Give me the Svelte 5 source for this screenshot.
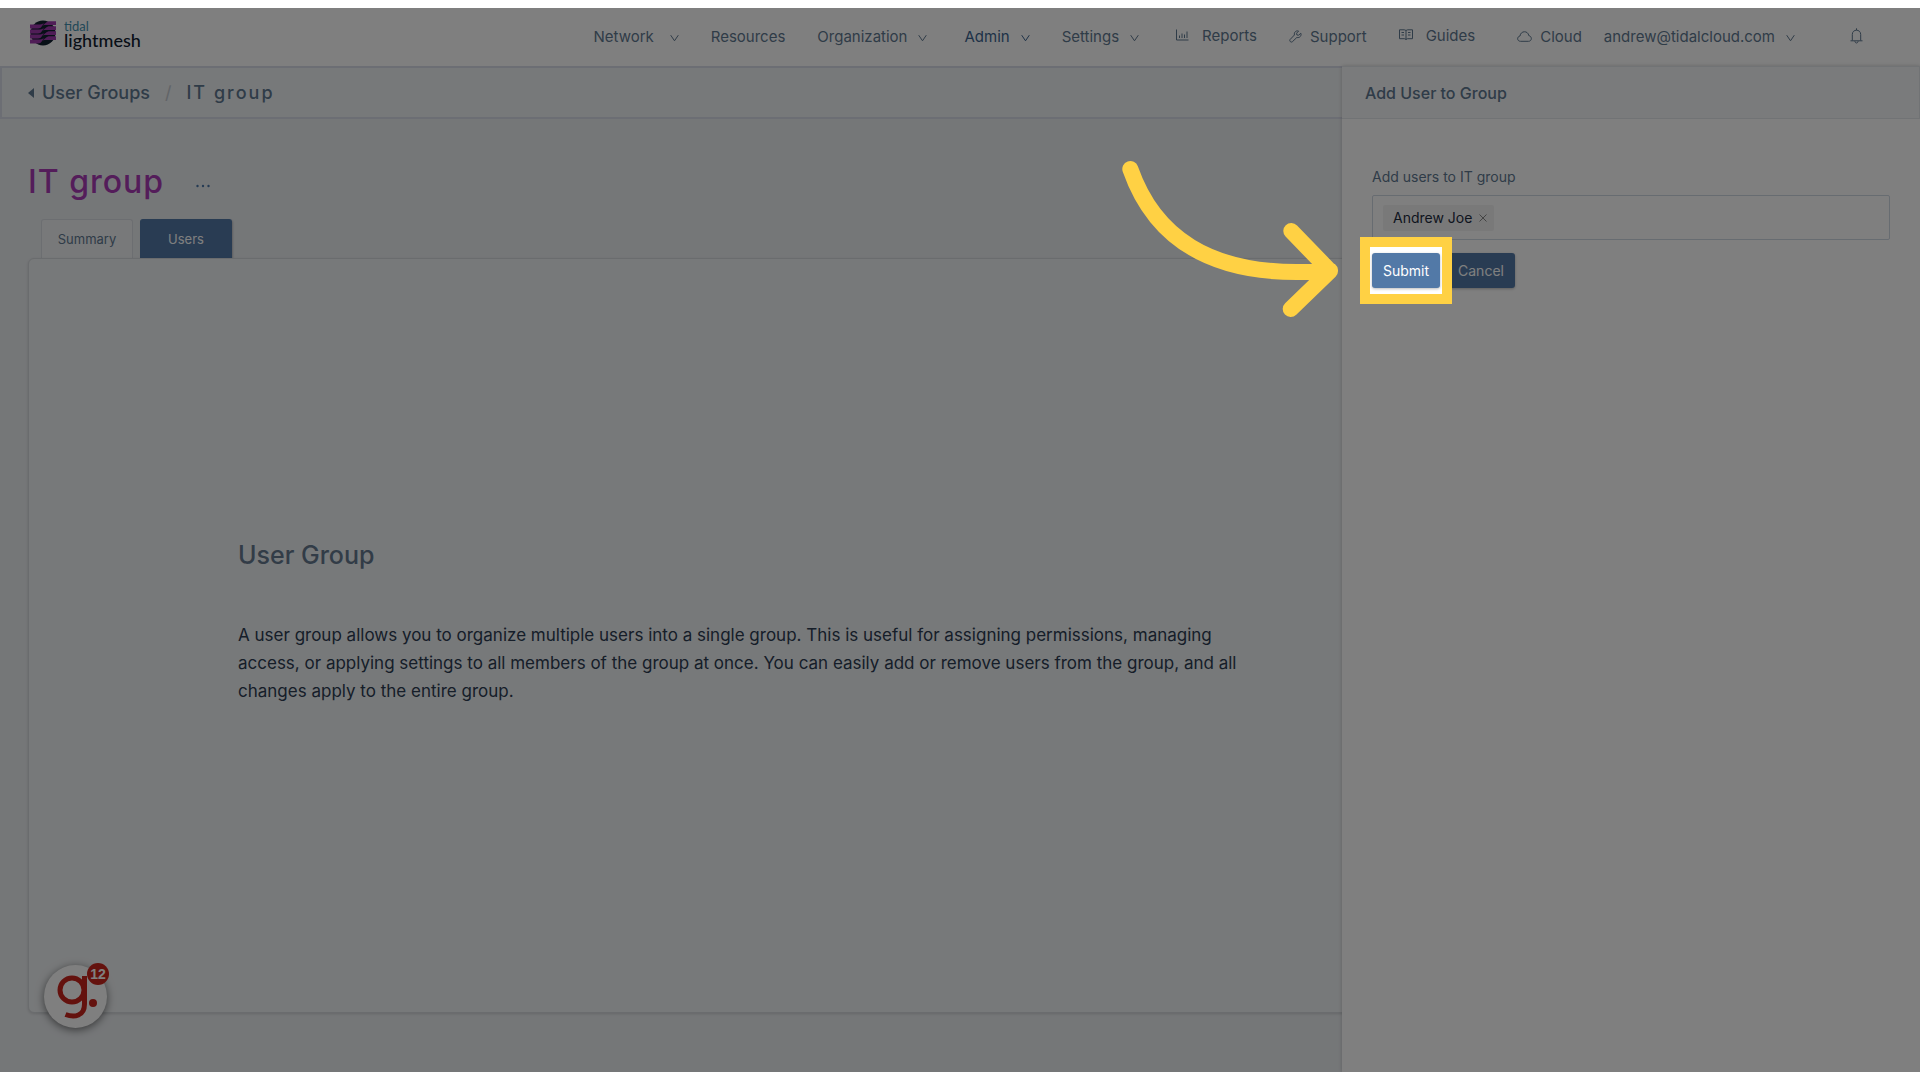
<script>
	let search = "";
	let users = ["Andrew Joe"];
	let activeTab = "Users";

	const tabs = ["Summary", "Users"];
	const links = [
		{name: "Network", chevron: true, spread: true},
		{name: "Resources"},
		{name: "Organization", chevron: true},
		{name: "Admin", chevron: true, active: true, gap: "medium"},
		{name: "Settings", chevron: true},
		{name: "Reports", icon: "chart", spread: true, raised: true, gap: "medium"},
		{name: "Support", icon: "wrench"},
		{name: "Guides", icon: "book", spread: true, raised: true},
		{name: "Cloud", icon: "cloud", gap: "wide"},
		{name: "andrew@tidalcloud.com", chevron: true, gap: "narrow"},
	];

	const removeUser = (name) => {
		users = users.filter((u) => u !== name);
	}
</script>

<div class="app">
	<header>
		<a href="#home" class="logo" aria-label="tidal lightmesh">
			<svg width="26" height="26" viewBox="0 0 26 26">
				<circle cx="13" cy="13" r="12.5" fill="#10202f" />
				<g fill="#a03aae">
					{#each [0, 5, 10, 15] as y}
						<path transform="translate(0 {y})" d="M0 4.500h8c3 0 4-.5 6-1.500-2 2-2 5.500-6 5.500H0z" />
						<path transform="translate(0 {y})" d="M26 1.200h-6c-4 0-4 2.300-8 4.300 3-.6 4-.5 6-.5h8z" />
					{/each}
				</g>
			</svg>
			<span class="brand"><span class="tidal">tidal</span><span class="mesh">lightmesh</span></span>
		</a>
		<nav>
			{#each links as link}
				<a href="#{link.name}" class="link {link.gap || ''}" class:active={link.active} class:spread={link.spread} class:raised={link.raised}>
					{#if link.icon === "chart"}
						<svg width="13" height="12" viewBox="0 0 13 12"><path d="M.5.5v10.500h12M3.500 9V6.500M6 9V4.500M8.500 9V5.500M11 9V2.500" /></svg>
					{:else if link.icon === "wrench"}
						<svg width="13" height="13" viewBox="0 0 13 13"><path d="M11.800 3.200 9.700 5.200 7.900 5 7.600 3.200 9.600 1.100C7.500.2 4.800 1.800 5.400 5L1 9.600c-1 1.400 1 3.300 2.300 2.200L7.800 7.500c3 .7 5-1.900 4-4.300z" /></svg>
					{:else if link.icon === "book"}
						<svg width="14" height="12" viewBox="0 0 14 12"><path d="M7 1.500v9M.5.800H5c1 0 2 .4 2 1.200C7 1.200 8 .8 9 .8h4.500v8.900H9c-1 0-2 .4-2 1.300 0-.9-1-1.300-2-1.300H.5zM2.500 3.500h2.500M2.500 6h2.500M9 3.500h2.500M9 6h2.500" /></svg>
					{:else if link.icon === "cloud"}
						<svg width="15" height="11" viewBox="0 0 15 11"><path d="M3.500 10.300C-.2 10.300-.2 5.500 3 5 3.700-.6 11-.6 11.800 4.600c3.400.6 3.400 5.700-.3 5.700z" /></svg>
					{/if}
					<span>{link.name}</span>
					{#if link.chevron}
						<svg class="chevron" width="9" height="8" viewBox="0 0 9 8"><path d="M.7 1.200 4.500 6.800 8.300 1.200" /></svg>
					{/if}
				</a>
			{/each}
			<button class="bell" aria-label="Notifications">
				<svg width="13" height="16" viewBox="0 0 13 16"><path d="M2.300 12.500V6.400c0-5.600 8.400-5.600 8.400 0v6.100M.5 12.800h12M6.500.3v1.800M4.900 13.200c.2 2.400 3 2.400 3.200 0" /></svg>
			</button>
		</nav>
	</header>

	<div class="crumbs">
		<a href="#groups"><svg width="6" height="10" viewBox="0 0 6 10"><path d="M6 0v10L0 5z" /></svg>User Groups</a>
		<span class="slash">/</span>
		<span class="current">IT group</span>
	</div>

	<main>
		<div class="title">
			<h1>IT group</h1>
			<button aria-label="More actions">
				<svg width="14" height="4" viewBox="0 0 14 4"><circle cx="1.500" cy="2" r="1.200" /><circle cx="7" cy="2" r="1.200" /><circle cx="12.500" cy="2" r="1.200" /></svg>
			</button>
		</div>
		<div class="tabs">
			{#each tabs as tab}
				<button class:selected={activeTab === tab} on:click={() => activeTab = tab}>{tab}</button>
			{/each}
		</div>
		<section class="card">
			<h2>User Group</h2>
			<p>A user group allows you to organize multiple users into a single group. This is useful for assigning permissions, managing access, or applying settings to all members of the group at once. You can easily add or remove users from the group, and all changes apply to the entire group.</p>
		</section>
	</main>

	<button class="guide" aria-label="Open guides">
		<svg width="63" height="63" viewBox="0 0 63 63" fill="none" stroke="#c9251c" stroke-width="5">
			<circle cx="28" cy="25" r="12" />
			<path d="M40.500 11v28c0 12-10 14-19 10.500" />
			<circle cx="49" cy="38" r="4" fill="#c9251c" stroke="none" />
		</svg>
		<span class="badge">12</span>
	</button>

	<aside>
		<h3>Add User to Group</h3>
		<form on:submit|preventDefault>
			<label for="users">Add users to IT group</label>
			<div class="select">
				{#each users as user}
					<span class="tag">{user}
						<button type="button" aria-label="Remove {user}" on:click={() => removeUser(user)}>
							<svg width="8" height="8" viewBox="0 0 8 8"><path d="M.5.5l7 7M7.500.5l-7 7" /></svg>
						</button>
					</span>
				{/each}
				<input id="users" type="text" bind:value={search}>
			</div>
			<div class="actions">
				<button type="button" class="btn">Cancel</button>
				<div class="target">
					<button type="submit" class="btn">Submit</button>
					<span class="spotlight"></span>
					<svg class="arrow" width="220" height="160" viewBox="0 0 220 160">
						<path d="M10.300 9C31.700 70 83.300 121.700 210 110.500M171.300 71 210 111 170.700 149" />
					</svg>
				</div>
			</div>
		</form>
	</aside>
</div>

<style>
	:global(body) {
		margin: 0;
		background: #fff;
	}
	.app, .app * {
		box-sizing: border-box;
	}
	.app {
		position: relative;
		display: flex;
		flex-direction: column;
		min-height: calc(100vh - 16px);
		margin: 8px 0;
		overflow: hidden;
		background: #ebeef1;
		color: #5f7890;
		font-family: Inter, "Liberation Sans", sans-serif;
		font-size: 15px;
	}
	a {
		color: inherit;
		text-decoration: none;
	}
	button {
		padding: 0;
		border: 0;
		background: none;
		color: inherit;
		font: inherit;
		cursor: pointer;
	}
	svg {
		flex: none;
	}

	header {
		display: flex;
		justify-content: space-between;
		height: 58px;
		padding: 0 57px 0 30px;
		background: #fff;
	}
	.logo {
		display: flex;
		gap: 8px;
		padding-top: 12px;
	}
	.brand {
		display: flex;
		flex-direction: column;
		font-family: Lato, sans-serif;
	}
	.tidal {
		font-size: 13px;
		line-height: 12px;
		color: #4591b0;
	}
	.mesh {
		font-size: 18px;
		line-height: 16px;
		font-weight: 500;
		color: #10202f;
	}
	nav {
		display: flex;
		align-items: center;
		padding-bottom: 2px;
	}
	nav svg {
		fill: none;
		stroke: currentColor;
	}
	.link {
		display: flex;
		align-items: center;
		gap: 8px;
		margin-left: 32px;
	}
	.link.spread {
		gap: 13px;
	}
	.link.raised {
		padding-bottom: 2px;
	}
	.link.medium {
		margin-left: 37px;
	}
	.link.wide {
		margin-left: 42px;
	}
	.link.narrow {
		margin-left: 22px;
	}
	.active {
		color: #3d6590;
	}
	.chevron {
		margin: 4px 0 0 3px;
	}
	.bell {
		margin-left: 55px;
		line-height: 0;
	}

	.crumbs {
		display: flex;
		align-items: center;
		height: 53px;
		padding-left: 26px;
		border: 2px solid #d9dce9;
		background: #eff2f4;
		font-size: 18px;
		font-weight: 500;
	}
	.crumbs a {
		display: flex;
		align-items: center;
		gap: 8px;
	}
	.crumbs svg {
		fill: currentColor;
	}
	.slash {
		margin: 0 15px;
		font-weight: 400;
		color: #c3c9d0;
	}
	.current {
		letter-spacing: 2px;
	}

	main {
		display: flex;
		flex-direction: column;
		flex: 1;
		padding: 41px 28px 59px;
	}
	.title {
		display: flex;
		align-items: center;
		gap: 32px;
	}
	h1 {
		margin: 0;
		font-size: 32px;
		line-height: 44px;
		font-weight: 500;
		letter-spacing: 1px;
		color: #a83bb5;
	}
	.title svg {
		fill: #4a77a8;
	}
	.tabs {
		display: flex;
		gap: 7px;
		margin: 15px 0 0 13px;
	}
	.tabs button {
		width: 92px;
		height: 39px;
		border: 1px solid #d9dde2;
		border-bottom: 0;
		border-radius: 3px 3px 0 0;
		background: #f0f3f5;
		font-size: 13px;
	}
	.tabs .selected {
		border-color: #5279a7;
		background: #5279a7;
		color: #fff;
		box-shadow: 1px 1px 2px #0003;
	}
	.card {
		display: flex;
		flex-direction: column;
		justify-content: center;
		flex: 1;
		padding: 0 209px 28px;
		border: 1px solid #d4d8dc;
		border-radius: 6px;
		background: #eff2f4;
		box-shadow: 0 1px 3px #0002;
	}
	h2 {
		margin: 0 0 50px;
		font-size: 25px;
		line-height: 32px;
		font-weight: 500;
		color: #64798f;
	}
	p {
		max-width: 1020px;
		margin: 0;
		font-size: 17px;
		line-height: 28px;
		color: #2d3c52;
	}

	.guide {
		position: absolute;
		bottom: 44px;
		left: 44px;
		width: 63px;
		height: 63px;
		border-radius: 50%;
		background: #fff;
		box-shadow: 0 2px 8px #0008;
	}
	.badge {
		position: absolute;
		top: -2px;
		right: -2px;
		width: 22px;
		border-radius: 50%;
		background: #c9251c;
		color: #fff;
		font: bold 14px/22px "Liberation Sans", sans-serif;
	}

	aside {
		position: absolute;
		top: 58px;
		right: 0;
		bottom: 0;
		width: 578px;
		background: #fff;
		box-shadow: 0 0 4px #0003;
	}
	h3 {
		margin: 0;
		padding: 2px 0 0 23px;
		border: 1px solid #e3e6eb;
		border-left: 0;
		background: #f4f6f9;
		font-size: 16px;
		line-height: 49px;
		font-weight: 500;
	}
	form {
		padding: 48px 30px;
		font-size: 14px;
	}
	label {
		display: block;
		line-height: 20px;
	}
	.select {
		display: flex;
		align-items: center;
		height: 45px;
		margin: 8px 0 13px;
		padding: 0 10px;
		border: 1px solid #cfd8e2;
		border-radius: 2px;
	}
	.tag {
		display: flex;
		align-items: center;
		gap: 7px;
		height: 26px;
		padding: 0 7px 0 10px;
		border-radius: 2px;
		background: #f3f3f3;
		color: #1d2b3e;
		font-size: 14px;
	}
	.tag button {
		line-height: 0;
	}
	.tag svg {
		fill: none;
		stroke: #888;
	}
	input {
		flex: 1;
		min-width: 0;
		border: 0;
		outline: 0;
		background: none;
		font: inherit;
	}
	.actions {
		display: flex;
		flex-direction: row-reverse;
		justify-content: flex-end;
		gap: 7px;
	}
	.target {
		position: relative;
	}
	.btn {
		min-width: 68px;
		height: 35px;
		padding: 0 10px;
		border-radius: 3px;
		background: #5279a7;
		color: #fff;
		box-shadow: 0 1px 3px #0004;
	}
	/* the shadow dims everything outside the yellow frame */
	.spotlight {
		position: absolute;
		inset: -16px -12px;
		border: 10px solid #ffd144;
		box-shadow: 0 0 0 4000px rgba(0, 0, 0, 0.5);
		pointer-events: none;
	}
	.arrow {
		position: absolute;
		top: -93px;
		left: -252px;
		fill: none;
		stroke: #ffd144;
		stroke-width: 16;
		stroke-linecap: round;
		stroke-linejoin: round;
		pointer-events: none;
	}
</style>
